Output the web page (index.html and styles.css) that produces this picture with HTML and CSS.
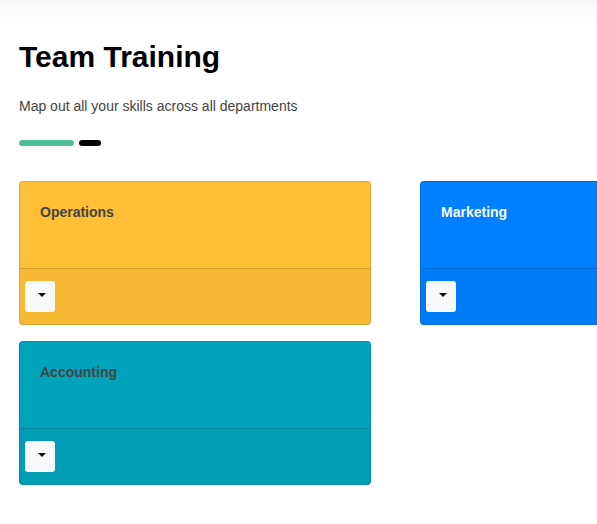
FILE: index.html
```html
<!DOCTYPE html>
<html lang="en">
<head>
  <meta charset="utf-8">
  <title>Team Training</title>
  <link rel="stylesheet" href="styles.css">
</head>
<body>
  <main class="page">
    <header class="intro">
      <h1 class="title">Team Training</h1>
      <p class="subtitle">Map out all your skills across all departments</p>
      <div class="divider"><span class="bar bar-long"></span><span class="bar bar-short"></span></div>
    </header>
    <section class="departments">
      <article class="card card-warning">
        <div class="card-body"><h2 class="card-title" id="operations">Operations</h2></div>
        <div class="card-footer">
          <button class="toggle" type="button" aria-labelledby="operations"><svg class="caret" viewBox="0 0 8 4"><path d="M0 0H8L4 4Z"/></svg></button>
        </div>
      </article>
      <article class="card card-primary">
        <div class="card-body"><h2 class="card-title" id="marketing">Marketing</h2></div>
        <div class="card-footer">
          <button class="toggle" type="button" aria-labelledby="marketing"><svg class="caret" viewBox="0 0 8 4"><path d="M0 0H8L4 4Z"/></svg></button>
        </div>
      </article>
      <article class="card card-info">
        <div class="card-body"><h2 class="card-title" id="accounting">Accounting</h2></div>
        <div class="card-footer">
          <button class="toggle" type="button" aria-labelledby="accounting"><svg class="caret" viewBox="0 0 8 4"><path d="M0 0H8L4 4Z"/></svg></button>
        </div>
      </article>
    </section>
  </main>
</body>
</html>
```
FILE: styles.css
```css
* {
  box-sizing: border-box;
}

body {
  margin: 0;
  overflow-x: hidden;
  background: #fff;
  color: #444;
  font: 14px/20px "Liberation Sans", Arial, sans-serif;
}

.page {
  padding: 39px 19px;
  background: linear-gradient(#f6f6f6, #fcfcfc 12px, #fff 26px) top / 100% 26px no-repeat;
}

.title {
  margin: 0 0 21px;
  color: #000;
  font-size: 30px;
  line-height: 36px;
}

.subtitle {
  margin: 0 0 24px;
}

.divider {
  display: flex;
  gap: 5px;
  margin-bottom: 35px;
}

.bar {
  height: 6px;
  border-radius: 3px;
}

.bar-long {
  width: 55px;
  background: #4fbf9b;
}

.bar-short {
  width: 22px;
  background: #000;
}

.departments {
  display: grid;
  grid-template-columns: repeat(2, 352px);
  gap: 16px 49px;
}

.card {
  border: 1px solid rgba(0, 0, 0, 0.125);
  border-radius: 4px;
}

.card-warning {
  background-color: #ffbf36;
}

.card-primary {
  background-color: #007fff;
  color: #f8f9fa;
}

.card-info {
  background-color: #00a3bb;
}

.card-body {
  min-height: 86px;
  padding: 20px;
}

.card-title {
  margin: 0;
  font-size: 14px;
  line-height: 20px;
}

.card-footer {
  display: flex;
  padding: 12px 5px;
  border-top: 1px solid rgba(0, 0, 0, 0.125);
  background: rgba(0, 0, 0, 0.03);
}

.toggle {
  display: flex;
  width: 30px;
  height: 31px;
  padding: 12px 9px 0 13px;
  border: 0;
  border-radius: 3px;
  background: #f8f9fa;
  color: #111;
}

.caret {
  width: 8px;
  height: 4px;
  fill: currentColor;
}
```
